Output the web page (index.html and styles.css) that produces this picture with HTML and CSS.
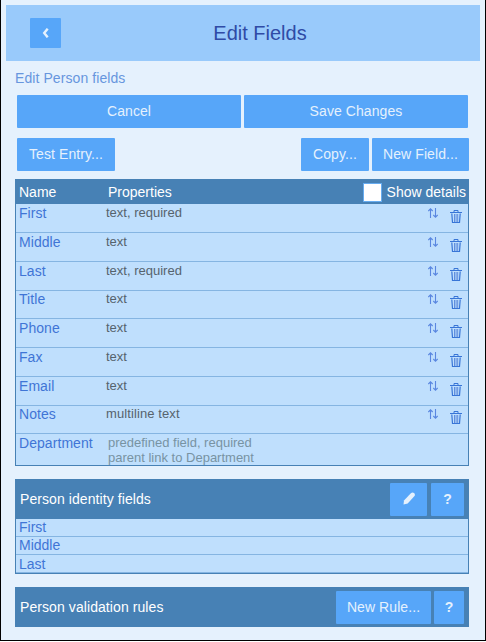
FILE: index.html
```html
<!DOCTYPE html>
<html lang="en">
<head>
<meta charset="utf-8">
<title>Edit Fields</title>
<link rel="stylesheet" href="styles.css">
</head>
<body>
<svg width="0" height="0" class="sprite">
  <symbol id="sort" viewBox="0 0 10 10"><path d="M2.5 10V1M.3 3 2.5.8 4.7 3M7.5 0v9M5.3 7l2.2 2.2L9.7 7" fill="none" stroke="#5a87e0" stroke-width="1.1"/></symbol>
  <symbol id="trash" viewBox="0 0 12 13"><path d="M0 2.5h12M4 2V.5h4V2" fill="none" stroke="#3875d7" stroke-width="1"/><path d="M1.8 3.5 2.5 12.5h7l.7-9" fill="none" stroke="#3875d7" stroke-width="1.2"/><path d="M4.5 4v8M6.1 4v8M7.7 4v8" stroke="#5585d9" stroke-width=".9"/></symbol>
</svg>
<div class="page">
  <header class="top"><button class="btn back"><svg width="7" height="10" viewBox="0 0 7 10"><path d="M5.7.7 2.2 5l3.5 4.3" fill="none" stroke="#e5f1fd" stroke-width="2.4"/></svg></button><h1>Edit Fields</h1></header>
  <main>
    <p class="hint">Edit Person fields</p>
    <div class="actions"><button class="btn">Cancel</button><button class="btn">Save Changes</button></div>
    <div class="tools"><button class="btn test">Test Entry...</button><button class="btn copy">Copy...</button><button class="btn new">New Field...</button></div>
    <section class="fields">
      <div class="head"><span class="name">Name</span><span>Properties</span><label><i class="check"></i>Show details</label></div>
      <div class="row"><span class="name">First</span><span class="prop">text, required</span><svg class="sort"><use href="#sort"/></svg><svg class="trash"><use href="#trash"/></svg></div>
      <div class="row"><span class="name">Middle</span><span class="prop">text</span><svg class="sort"><use href="#sort"/></svg><svg class="trash"><use href="#trash"/></svg></div>
      <div class="row"><span class="name">Last</span><span class="prop">text, required</span><svg class="sort"><use href="#sort"/></svg><svg class="trash"><use href="#trash"/></svg></div>
      <div class="row short"><span class="name">Title</span><span class="prop">text</span><svg class="sort"><use href="#sort"/></svg><svg class="trash"><use href="#trash"/></svg></div>
      <div class="row"><span class="name">Phone</span><span class="prop">text</span><svg class="sort"><use href="#sort"/></svg><svg class="trash"><use href="#trash"/></svg></div>
      <div class="row"><span class="name">Fax</span><span class="prop">text</span><svg class="sort"><use href="#sort"/></svg><svg class="trash"><use href="#trash"/></svg></div>
      <div class="row"><span class="name">Email</span><span class="prop">text</span><svg class="sort"><use href="#sort"/></svg><svg class="trash"><use href="#trash"/></svg></div>
      <div class="row short"><span class="name">Notes</span><span class="prop wide">multiline text</span><svg class="sort"><use href="#sort"/></svg><svg class="trash"><use href="#trash"/></svg></div>
      <div class="row last"><span class="name">Department</span><span class="prop muted">predefined field, required<br>parent link to Department</span></div>
    </section>
    <section class="panel">
      <div class="bar"><h2>Person identity fields</h2><button class="btn edit"><svg width="12" height="13" viewBox="0 0 12 13"><path d="M.5 12.5 1 8.6 7.6 1.4Q9.5-.3 11 1t.5 3L4.7 11.5Z" fill="#e5f1fd"/></svg></button><button class="btn help">?</button></div>
      <div class="item">First</div><div class="item">Middle</div><div class="item third">Last</div>
    </section>
    <section class="panel rules">
      <div class="bar"><h2>Person validation rules</h2><button class="btn rule">New Rule...</button><button class="btn help small">?</button></div>
    </section>
  </main>
</div>
</body>
</html>
```
FILE: styles.css
```css
* { box-sizing: border-box; }
body { margin: 0; background: #fff; font: 14px/16px "Liberation Sans", Arial, sans-serif; }
.sprite { position: absolute; }
.page { height: 641px; padding: 5px 5px 0; background: #e5f1fd; border: solid #000; border-width: 0 1px 1px; }
.top { display: flex; align-items: center; height: 56px; width: 474px; padding: 0 0 0 24px; background: #99cafb; }
h1 { flex: 1; margin: 0; padding-right: 21px; text-align: center; font-size: 20px; font-weight: 400; line-height: 24px; color: #2f4ba6; }
.btn { display: flex; align-items: center; justify-content: center; height: 33px; padding: 0 0 2px; border: 0; border-radius: 1px; background: #57a6f9; color: #e5f1fd; font: inherit; letter-spacing: .08px; }
.back { width: 31px; height: 30px; padding: 0; }
main { padding: 9px 10px 0 9px; }
.hint { margin: 0; color: #6796de; letter-spacing: .08px; }
.actions { display: grid; grid-template-columns: 224px 224px; gap: 3px; margin: 9px 0 10px 2px; }
.tools { display: flex; gap: 3px; width: 452px; margin-left: 2px; }
.test { width: 98px; margin-right: auto; }
.copy { width: 68px; }
.new { width: 97px; }
.fields, .panel { width: 454px; border: 1px solid #4781b5; background: #bfdffd; }
.fields { height: 287px; margin-top: 8px; }
.head { display: flex; align-items: center; height: 24px; padding: 0 2px 0 3px; background: #4781b5; color: #fff; }
.name { width: 89px; flex: none; }
.head label { display: flex; align-items: center; gap: 5px; margin-left: auto; }
.check { width: 19px; height: 19px; border: 1px solid #67acf0; background: #fff; }
.row { display: flex; height: 29px; padding: 1px 6px 0 3px; border-bottom: 1px solid #85b5e2; color: #3f75d6; }
.row.short { height: 28px; padding-top: 0; }
.row.last { height: 31px; border: 0; }
.row .name { letter-spacing: .06px; }
.prop { margin: 0 auto 0 -2px; font-size: 13px; line-height: 15px; color: #56636d; }
.prop.wide { letter-spacing: .1px; }
.muted { margin-left: 0; color: #7893a3; }
.sort { width: 10px; height: 10px; margin: 3px 12px 0 0; }
.trash { width: 12px; height: 13px; margin-top: 5px; }
.panel { height: 95px; margin-top: 13px; }
.bar { display: flex; height: 39px; padding: 3px 4px 0; background: #4781b5; }
h2 { margin: 8px auto 0 0; font: inherit; letter-spacing: .08px; color: #fff; }
.edit { width: 37px; margin-right: 4px; }
.help { width: 33px; font-weight: 700; }
.help.small { width: 30px; margin-left: 3px; }
.rule { width: 95px; }
.item { height: 18px; padding-left: 3px; border-bottom: 1px solid #85b5e2; color: #3f75d6; }
.item.third { padding-top: 1px; }
.panel.rules { height: 40px; }
.rules .bar { height: 38px; }
```
